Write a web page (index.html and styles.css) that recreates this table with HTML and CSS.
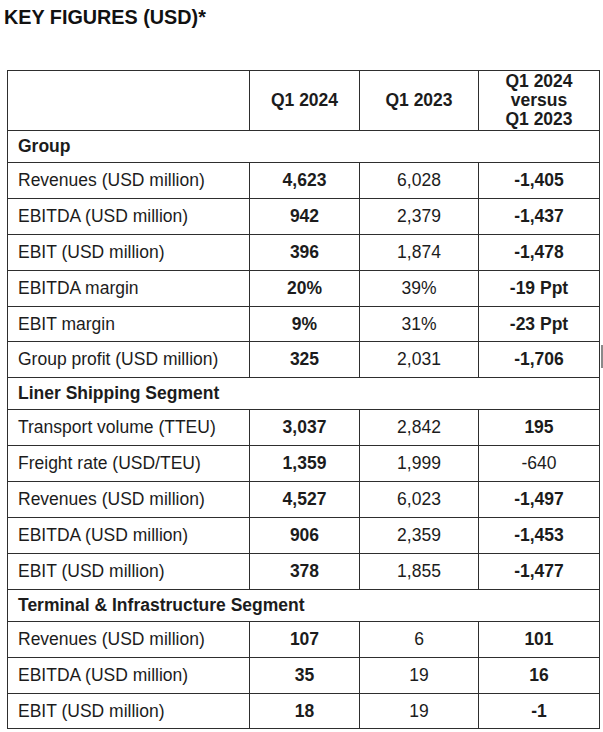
FILE: index.html
```html
<!DOCTYPE html>
<html lang="en">
<head>
<meta charset="utf-8">
<title>Key Figures</title>
<link rel="stylesheet" href="styles.css">
</head>
<body>
<h1 class="title">KEY FIGURES (USD)*</h1>
<div class="wrap">
<table class="kf">
  <colgroup>
    <col class="c1"><col class="c2"><col class="c3"><col class="c4">
  </colgroup>
  <tr class="head">
    <td></td><td class="b">Q1 2024</td><td class="b">Q1 2023</td><td class="b">Q1 2024<br>versus<br>Q1 2023</td>
  </tr>
  <tr class="sec"><td colspan="4">Group</td></tr>
  <tr><td>Revenues (USD million)</td><td class="b">4,623</td><td>6,028</td><td class="b">-1,405</td></tr>
  <tr><td>EBITDA (USD million)</td><td class="b">942</td><td>2,379</td><td class="b">-1,437</td></tr>
  <tr><td>EBIT (USD million)</td><td class="b">396</td><td>1,874</td><td class="b">-1,478</td></tr>
  <tr><td>EBITDA margin</td><td class="b">20%</td><td>39%</td><td class="b">-19 Ppt</td></tr>
  <tr><td>EBIT margin</td><td class="b">9%</td><td>31%</td><td class="b">-23 Ppt</td></tr>
  <tr><td>Group profit (USD million)</td><td class="b">325</td><td>2,031</td><td class="b">-1,706</td></tr>
  <tr class="sec"><td colspan="4">Liner Shipping Segment</td></tr>
  <tr><td>Transport volume (TTEU)</td><td class="b">3,037</td><td>2,842</td><td class="b">195</td></tr>
  <tr><td>Freight rate (USD/TEU)</td><td class="b">1,359</td><td>1,999</td><td>-640</td></tr>
  <tr><td>Revenues (USD million)</td><td class="b">4,527</td><td>6,023</td><td class="b">-1,497</td></tr>
  <tr><td>EBITDA (USD million)</td><td class="b">906</td><td>2,359</td><td class="b">-1,453</td></tr>
  <tr><td>EBIT (USD million)</td><td class="b">378</td><td>1,855</td><td class="b">-1,477</td></tr>
  <tr class="sec"><td colspan="4">Terminal &amp; Infrastructure Segment</td></tr>
  <tr><td>Revenues (USD million)</td><td class="b">107</td><td>6</td><td class="b">101</td></tr>
  <tr><td>EBITDA (USD million)</td><td class="b">35</td><td>19</td><td class="b">16</td></tr>
  <tr><td>EBIT (USD million)</td><td class="b">18</td><td>19</td><td class="b">-1</td></tr>
</table>
<span class="mark"></span>
</div>
</body>
</html>
```
FILE: styles.css
```css
html, body {
  margin: 0;
  padding: 0;
  background: #fff;
}
body {
  font-family: "Liberation Sans", Arial, sans-serif;
  color: #1c1c1c;
}
.title {
  margin: 7px 0 0 4px;
  font-size: 19.8px;
  font-weight: bold;
  line-height: 21px;
  color: #111;
}
.wrap {
  position: relative;
  margin: 42px 0 0 7px;
}
.kf {
  border-collapse: collapse;
  table-layout: fixed;
  width: 592px;
  font-size: 17.5px;
}
.c1 { width: 242px; }
.c2 { width: 110px; }
.c3 { width: 119px; }
.c4 { width: 121px; }
.kf td {
  border: 1.5px solid #2e2e2e;
  height: 34.9px;
  padding: 0;
  text-align: center;
  vertical-align: middle;
  line-height: 19px;
}
.kf td:first-child {
  text-align: left;
  padding-left: 10px;
}
.kf .head td {
  height: 59px;
}
.kf .sec td {
  height: 31px;
  font-weight: bold;
  text-align: left;
  padding-left: 10px;
}
.kf .b {
  font-weight: bold;
}
.mark {
  position: absolute;
  left: 594px;
  top: 275px;
  width: 2px;
  height: 23px;
  background: #8a8a8a;
}
```
